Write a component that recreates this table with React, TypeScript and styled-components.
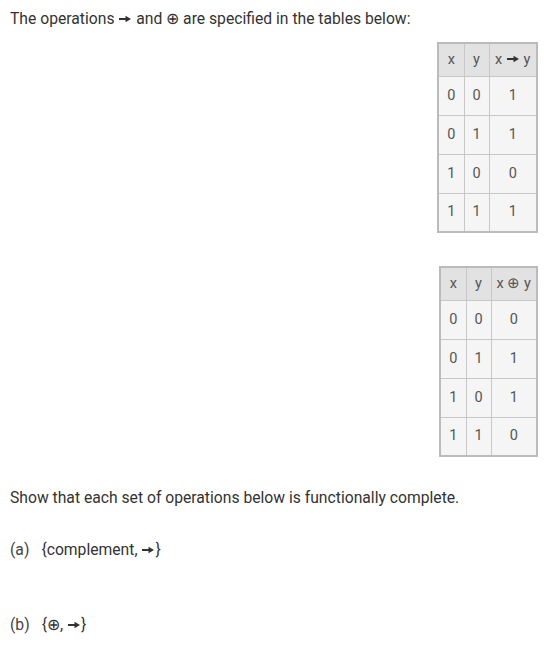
import React from "react";
import styled, { createGlobalStyle } from "styled-components";

const GlobalStyle = createGlobalStyle`
  body {
    margin: 0;
    background: #fff;
    font-family: Roboto, "Liberation Sans", sans-serif;
    color: #333;
  }
`;

interface Row {
  x: number;
  y: number;
  r: number;
}

const implies: Row[] = [
  { x: 0, y: 0, r: 1 },
  { x: 0, y: 1, r: 1 },
  { x: 1, y: 0, r: 0 },
  { x: 1, y: 1, r: 1 },
];

const xor: Row[] = [
  { x: 0, y: 0, r: 0 },
  { x: 0, y: 1, r: 1 },
  { x: 1, y: 0, r: 1 },
  { x: 1, y: 1, r: 0 },
];

// 폰트 화살표는 너무 작아서 svg로 그림
const Arrow = () => (
  <ArrowIcon viewBox="0 0 12 8" role="img" aria-label="→">
    <title>→</title>
    <rect x="0" y="3" width="7" height="2" fill="currentColor" />
    <path d="M6.5 0.8 L12 4 L6.5 7.2 Z" fill="currentColor" />
  </ArrowIcon>
);

// 진리표 하나
const TruthTable = ({
  op,
  rows,
  top,
  lastW,
}: {
  op: React.ReactNode;
  rows: Row[];
  top: number;
  lastW: number;
}) => (
  <Table $top={top}>
    <thead>
      <tr>
        <Th $w={26}>x</Th>
        <Th $w={25}>y</Th>
        <Th $w={lastW}>
          x {op} y
        </Th>
      </tr>
    </thead>
    <tbody>
      {rows.map((row, i) => (
        <tr key={i}>
          <Td>{row.x}</Td>
          <Td>{row.y}</Td>
          <Td>{row.r}</Td>
        </tr>
      ))}
    </tbody>
  </Table>
);

export default function App() {
  return (
    <Page>
      <GlobalStyle />
      <Intro>
        The operations <Arrow /> and ⊕ are specified in the tables below:
      </Intro>
      <Tables>
        <TruthTable op={<Arrow />} rows={implies} top={13} lastW={48} />
        <TruthTable op="⊕" rows={xor} top={33} lastW={46} />
      </Tables>
      <Question>Show that each set of operations below is functionally complete.</Question>
      <Part $top={32}>
        <Label>(a)</Label>
        <span>
          {"{complement, "}
          <Arrow />
          {"}"}
        </span>
      </Part>
      <Part $top={55}>
        <Label>(b)</Label>
        <span>
          {"{⊕, "}
          <Arrow />
          {"}"}
        </span>
      </Part>
    </Page>
  );
}

const Page = styled.div`
  padding: 9px 10px;
  font-size: 15.7px;
  line-height: 20px;
`;

const ArrowIcon = styled.svg`
  display: inline-block;
  width: 12px;
  height: 8px;
  margin: 0 1px;
  vertical-align: 1px;
  color: #333;
`;

const Intro = styled.p`
  margin: 0;
`;

const Tables = styled.div`
  display: flex;
  flex-direction: column;
  align-items: flex-end;
`;

const Table = styled.table<{ $top: number }>`
  margin-top: ${(p) => p.$top}px;
  margin-right: 2px;
  border-collapse: collapse;
  border: 2px solid #bbb;
  font-size: 14.5px;
  color: #555;
  text-align: center;
`;

const Th = styled.th<{ $w: number }>`
  width: ${(p) => p.$w}px;
  height: 33px;
  padding: 0 3px;
  background: #e2e2e2;
  border: 1px solid #c8c8c8;
  font-weight: 400;
  box-sizing: border-box;
  white-space: nowrap;
`;

const Td = styled.td`
  height: 39px;
  padding: 0 3px;
  background: #f5f5f5;
  border: 1px solid #c8c8c8;
  box-sizing: border-box;
`;

const Question = styled.p`
  margin: 31px 0 0;
`;

const Part = styled.p<{ $top: number }>`
  margin: ${(p) => p.$top}px 0 0;
  display: flex;
  gap: 12px;
`;

const Label = styled.span`
  color: #444;
`;
